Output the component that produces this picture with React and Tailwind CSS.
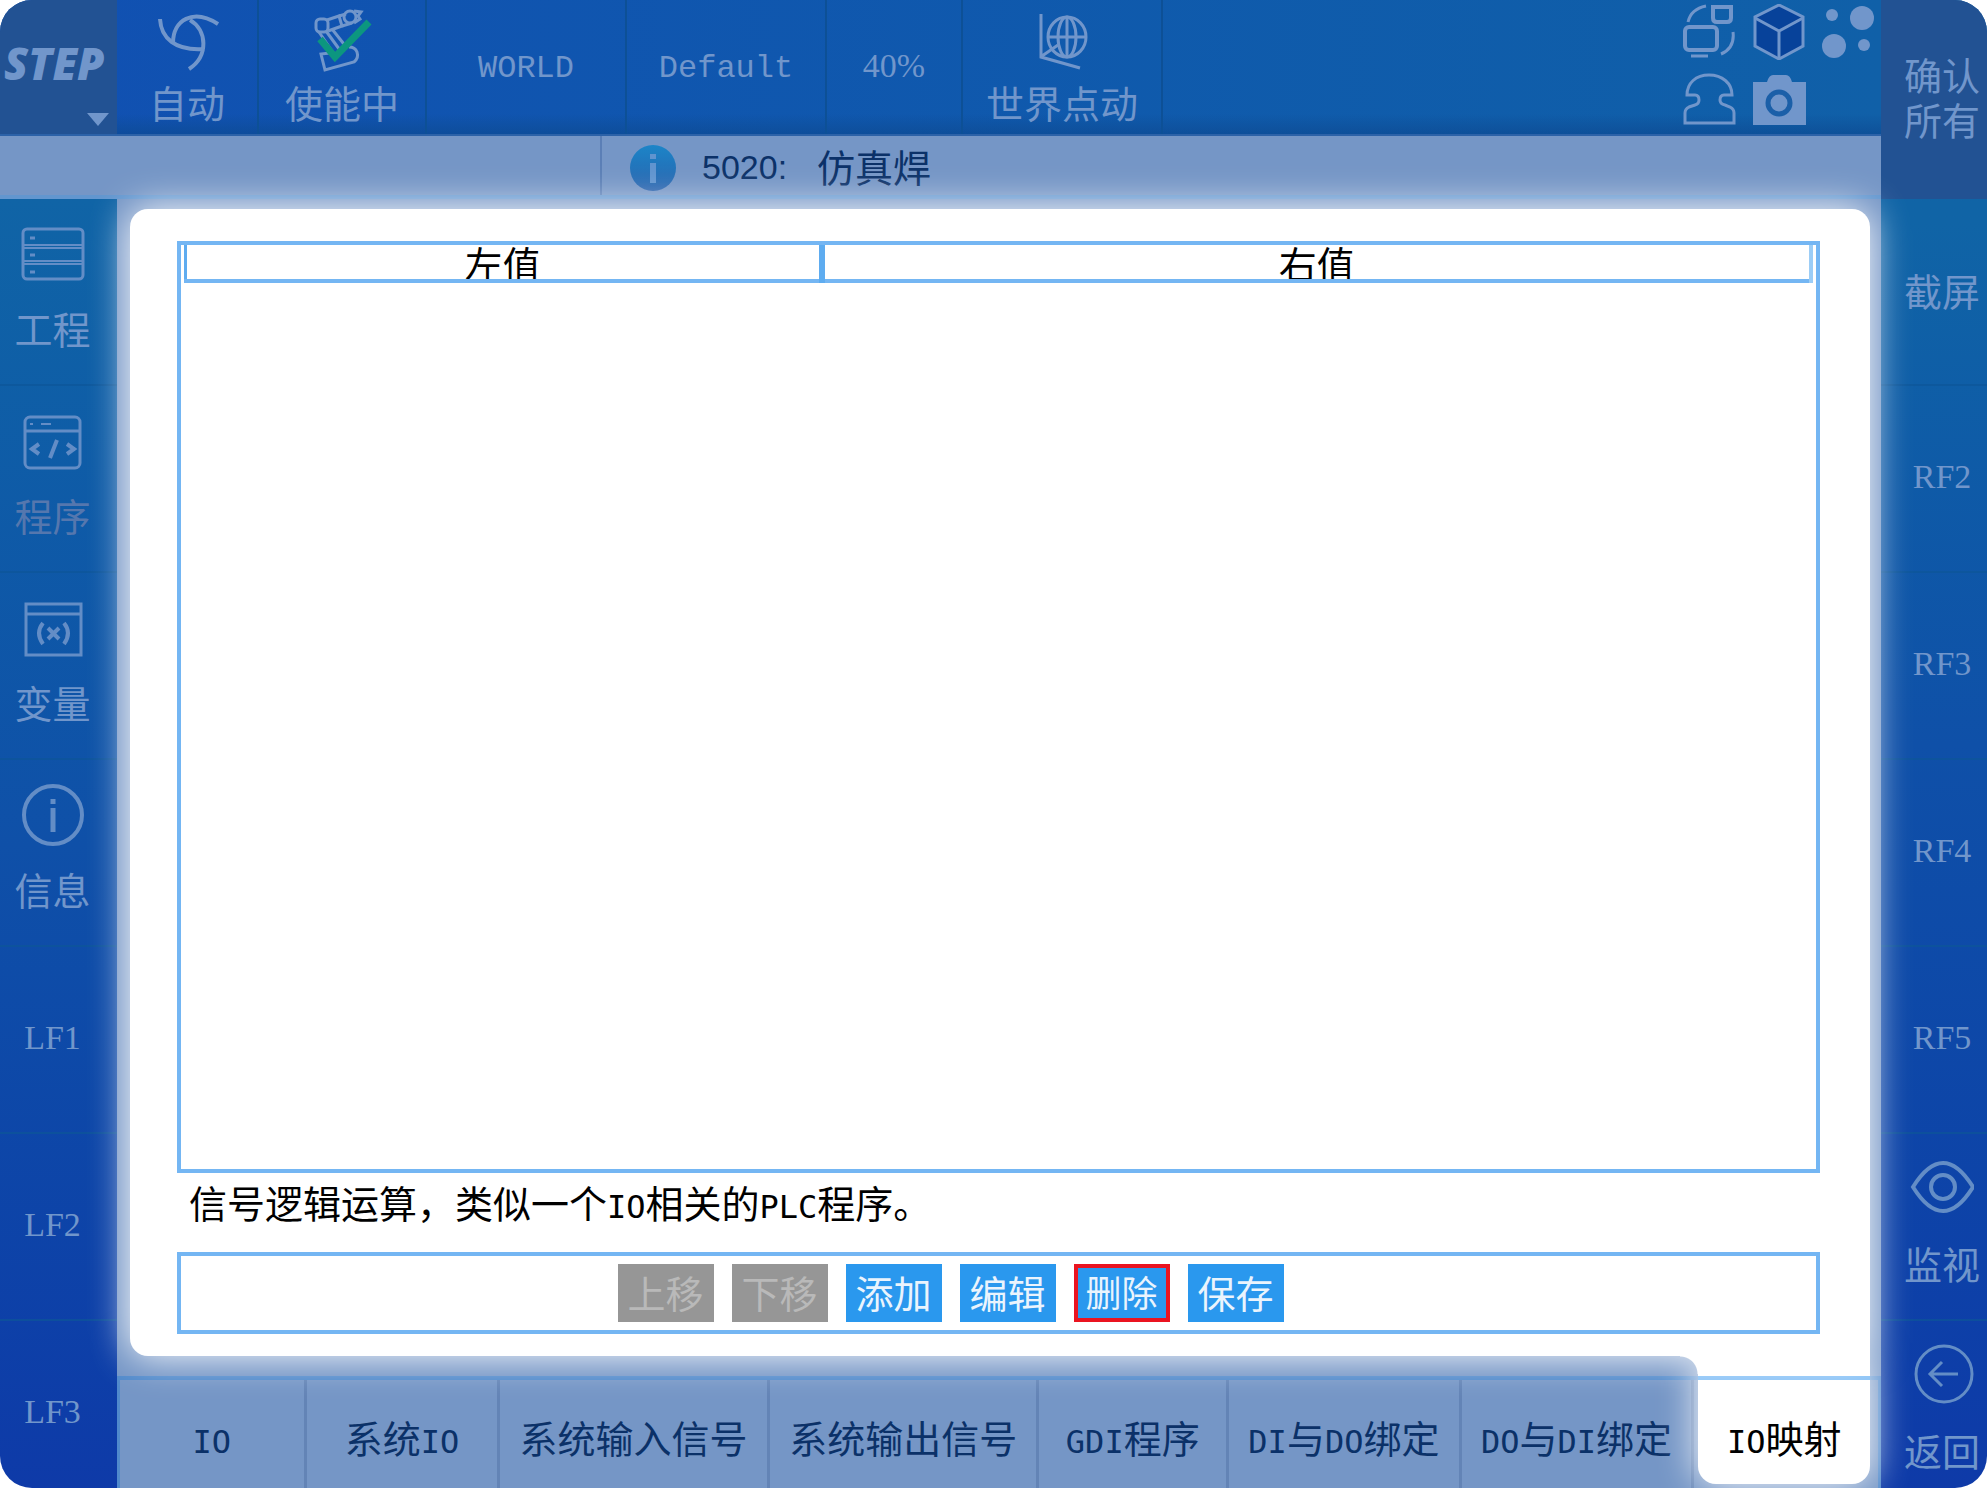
import { useState } from "react";

const leftItems = [
  { label: "工程", icon: "project" },
  { label: "程序", icon: "code", dim: true },
  { label: "变量", icon: "variable" },
  { label: "信息", icon: "info" },
  { label: "LF1" },
  { label: "LF2" },
  { label: "LF3" },
];

const rightItems = [
  { label: "截屏" },
  { label: "RF2" },
  { label: "RF3" },
  { label: "RF4" },
  { label: "RF5" },
  { label: "监视", icon: "eye" },
  { label: "返回", icon: "back" },
];

const tabs = [
  "IO",
  "系统IO",
  "系统输入信号",
  "系统输出信号",
  "GDI程序",
  "DI与DO绑定",
  "DO与DI绑定",
  "IO映射",
];

const actions = [
  { label: "上移", disabled: true },
  { label: "下移", disabled: true },
  { label: "添加" },
  { label: "编辑" },
  { label: "删除", danger: true },
  { label: "保存" },
];

const stroke = { fill: "none", stroke: "currentColor", strokeWidth: 3 };

const icons = {
  project: (
    <g {...stroke}>
      <rect x="2" y="7" width="60" height="50" rx="4" />
      <path d="M2 23h60M2 26h60M2 39h60M2 42h60" strokeWidth="2" />
      <path d="M9 16h5M9 33h5M9 50h5" />
    </g>
  ),
  code: (
    <g {...stroke}>
      <rect x="4" y="8" width="55" height="51" rx="5" />
      <path d="M4 22h55" />
      <path d="M9 15h3M20 15h10" strokeWidth="2" />
      <path d="M18 35l-7 5 7 5M46 35l7 5-7 5M36 31l-7 18" strokeWidth="4" />
    </g>
  ),
  variable: (
    <g {...stroke}>
      <rect x="5" y="8" width="55" height="51" />
      <path d="M5 18h55" />
      <path d="M22 27q-8 10 0 21M43 27q8 10 0 21M27 32l11 11M38 32l-11 11" strokeWidth="4" />
    </g>
  ),
  info: (
    <g {...stroke}>
      <circle cx="32" cy="32" r="29" strokeWidth="4" />
      <path d="M32 16v5M32 25v24" strokeWidth="5" />
    </g>
  ),
  eye: (
    <g {...stroke} strokeWidth="4">
      <path d="M3 30Q18 6 33 6T63 30Q48 54 33 54T3 30z" />
      <circle cx="33" cy="30" r="12" />
    </g>
  ),
  back: (
    <g {...stroke}>
      <circle cx="34" cy="30" r="28" />
      <path d="M48 30H21M32 18L20 30l12 12" />
    </g>
  ),
};

function Icon({ name }) {
  return (
    <svg viewBox="0 0 64 64" className="h-16 w-16">
      {icons[name]}
    </svg>
  );
}

// Latin runs are half the width of a Chinese character
function Label({ text }) {
  return text.split(/([A-Za-z]+)/).map((part, i) =>
    /^[A-Za-z]+$/.test(part) ? (
      <span key={i} className="font-['DejaVu_Sans_Mono',monospace] text-[32px] leading-none">
        {part}
      </span>
    ) : (
      part
    ),
  );
}

function SideButton({ item, className }) {
  return (
    <button
      type="button"
      className={`flex h-[187px] w-full shrink-0 flex-col items-center border-b-2 border-[#0d5598]/70 leading-[44px] ${
        item.icon ? "pt-[23px]" : "justify-center pb-1"
      } ${item.dim ? "text-[#5577ae]" : "text-[#7196cb]"} ${className}`}
    >
      {item.icon && (
        <span className="mb-5 text-[#638dc6]">
          <Icon name={item.icon} />
        </span>
      )}
      <span
        className={
          item.label.length === 3 ? "font-['Liberation_Serif',serif] text-[34px]" : "text-[38px]"
        }
      >
        {item.label}
      </span>
    </button>
  );
}

function StatusCell({ label, children, className }) {
  return (
    <button
      type="button"
      className={`flex h-full shrink-0 flex-col items-center border-r-2 border-[#0d5096] ${
        children ? "pt-2" : "justify-center"
      } ${className}`}
    >
      {children}
      <span className={children ? "mt-1 leading-[44px]" : ""}>{label}</span>
    </button>
  );
}

function Header() {
  return (
    <header className="flex h-[136px] shrink-0 border-b-2 border-[#2c62a8] bg-linear-to-r from-[#1150b2] to-[#1060a8] text-[38px] text-[#7196cb]">
      <button
        type="button"
        className="flex w-[117px] shrink-0 flex-col items-start bg-[#225293] pt-9 pl-1 font-['Open_Sans',sans-serif] text-[44px] leading-[54px] font-extrabold italic"
      >
        STEP
        <svg viewBox="0 0 22 13" className="mt-[23px] mr-2 h-[13px] w-[22px] self-end">
          <path d="M0 0h22L11 13z" fill="currentColor" />
        </svg>
      </button>
      <div className="flex min-w-0 flex-1 bg-linear-to-t from-[#0d4a92]/70 to-transparent to-15%">
        <StatusCell label="自动" className="w-[142px]">
          <svg viewBox="0 0 64 68" className="h-17 w-16" {...stroke} strokeWidth="4">
            <path d="M5 11C6 30 20 43 49 41" />
            <path d="M18 35C18 12 38 0 63 16" />
            <path d="M35 12C52 22 54 48 34 61" />
          </svg>
        </StatusCell>
        <StatusCell label="使能中" className="w-[168px]">
          <svg viewBox="0 0 64 68" className="h-17 w-16" {...stroke}>
            <rect x="6" y="11" width="12" height="13" rx="4" />
            <path d="M17 12l12-4 3 10-14 5" />
            <path d="M29 8l7-2M32 18l10-3M44 3l7 1-3 4 2 3-6 4" />
            <circle cx="40" cy="9" r="6" />
            <path d="M9 24l15 22M16 23l16 22M22 21l15 19" />
            <path d="M20 45l-9 1 4 16 29-8q5-4 3-10-2-5-8-5" />
            <path d="M10 31l15 18 34-35" stroke="#0c967f" strokeWidth="7" />
          </svg>
        </StatusCell>
        <StatusCell
          label="WORLD"
          className="w-[200px] pt-1 font-['Liberation_Mono',monospace] text-[32px]"
        />
        <StatusCell
          label="Default"
          className="w-[200px] pt-1 font-['Liberation_Mono',monospace] text-[32px]"
        />
        <StatusCell
          label="40%"
          className="w-[136px] pb-1 font-['Liberation_Serif',serif] text-[34px]"
        />
        <StatusCell label="世界点动" className="w-[200px]">
          <svg viewBox="0 0 64 68" className="h-17 w-16" {...stroke}>
            <path d="M11 6v43l39 11M12 48l16-11" />
            <ellipse cx="37" cy="29" rx="19" ry="20" />
            <ellipse cx="37" cy="29" rx="9" ry="20" />
            <path d="M37 9v40M18 29h38" />
          </svg>
        </StatusCell>
        <div className="ml-auto grid grid-cols-3 content-start gap-x-4 gap-y-3 pt-1 pr-[5px]">
          <button type="button" aria-label="切换">
            <svg viewBox="0 0 54 56" className="h-14 w-[54px]" {...stroke}>
              <rect x="3" y="23" width="32" height="23" rx="4" strokeWidth="4" />
              <path d="M9 52h17M6 18Q9 5 24 2" />
              <path d="M31 3h18v11q0 4-4 4H35q-4 0-4-4z" strokeWidth="4" />
              <path d="M51 28q2 16-12 22" />
            </svg>
          </button>
          <button type="button" aria-label="模型">
            <svg viewBox="0 0 54 56" className="h-14 w-[54px]" {...stroke} fill="#07429a">
              <path d="M27 1l24 12v29L27 55 3 42V13z" />
              <path d="M3 14l24 13 24-13M27 27v28" fill="none" />
            </svg>
          </button>
          <button type="button" aria-label="状态">
            <svg viewBox="0 0 54 56" className="h-14 w-[54px]" fill="currentColor">
              <circle cx="10" cy="11" r="6" />
              <circle cx="40" cy="14" r="12" />
              <circle cx="12" cy="42" r="12" />
              <circle cx="42" cy="41" r="6" />
            </svg>
          </button>
          <button type="button" aria-label="用户">
            <svg viewBox="0 0 54 56" className="h-14 w-[54px]" {...stroke}>
              <path d="M5 23C5 11 14 3 27 3s23 8 23 20h-8q-4 0-4 5 0 4 5 5l5 2q4 2 4 6v10H3V41q0-4 4-6l6-2q4-1 4-5 0-5-4-5z" />
            </svg>
          </button>
          <button type="button" aria-label="相机">
            <svg viewBox="0 0 54 56" className="h-14 w-[54px]">
              <path d="M1 10h14q2-7 6-7h13q4 0 6 7h14v43H1z" fill="currentColor" />
              <circle cx="27" cy="31" r="11" fill="none" stroke="#1b5fa8" strokeWidth="5" />
            </svg>
          </button>
        </div>
      </div>
    </header>
  );
}

function MessageBar() {
  return (
    <div className="flex h-[63px] shrink-0 border-b-4 border-[#6296cf] bg-[#7596c6] text-[38px] leading-[59px] text-[#0b3168]">
      <div className="w-[602px] shrink-0 border-r-2 border-[#5b7fb6]" />
      <div className="flex items-center pt-1 pl-[27px]">
        <svg viewBox="0 0 48 48" className="mr-[25px] h-12 w-12">
          <defs>
            <linearGradient id="badge" x1="0" y1="0" x2="0" y2="1">
              <stop offset="0" stopColor="#1c85c8" />
              <stop offset="1" stopColor="#2862ad" />
            </linearGradient>
          </defs>
          <circle cx="24" cy="24" r="23" fill="url(#badge)" />
          <path d="M24 10v5M24 19v20" stroke="#6094cf" strokeWidth="6" />
        </svg>
        <span className="font-['Liberation_Sans',sans-serif] text-[34px]">5020:</span>
        <span className="ml-[30px] pb-1">仿真焊</span>
      </div>
    </div>
  );
}

function MappingTable() {
  return (
    <div className="min-h-0 flex-1 border-4 border-[#74b6f3] px-[3px]">
      <table className="w-full table-fixed border-collapse">
        <thead>
          <tr className="border-b-4 border-[#74b6f3] text-[38px]">
            <th className="w-[636px] border-r-6 border-l-3 border-[#5eacf0] p-0 font-normal">
              <div className="h-[34px] overflow-hidden leading-[36px]">左值</div>
            </th>
            <th className="border-r-4 border-r-[#9ccdf6] p-0 font-normal">
              <div className="h-[34px] overflow-hidden leading-[36px]">右值</div>
            </th>
          </tr>
        </thead>
        <tbody />
      </table>
    </div>
  );
}

function Panel() {
  return (
    <section className="relative z-20 mt-[10px] mr-[11px] mb-5 ml-[13px] flex min-h-0 flex-1 flex-col rounded-[18px] rounded-br-none bg-white pt-8 pr-[50px] pb-[22px] pl-[47px] text-black shadow-[0_0_38px_#fff]">
      <MappingTable />
      <p className="h-[79px] pl-3 text-[38px] leading-[58px]">
        <Label text="信号逻辑运算，类似一个IO相关的PLC程序。" />
      </p>
      <div className="flex items-center justify-center gap-[18px] border-4 border-[#74b6f3] py-2 pr-24">
        {actions.map(({ label, disabled, danger }) => (
          <button
            key={label}
            type="button"
            disabled={disabled}
            className={`flex h-[58px] w-24 items-center justify-center pb-1 ${
              disabled ? "bg-[#969696] text-[#b9b9b9]" : "bg-[#2a98ee] text-[#eaf4fd]"
            } ${danger ? "border-4 border-[#ea1420] text-[36px]" : "text-[38px]"}`}
          >
            {label}
          </button>
        ))}
      </div>
    </section>
  );
}

function TabBar() {
  const [active, setActive] = useState("IO映射");

  return (
    <nav className="grid h-[112px] shrink-0 grid-cols-[187fr_194fr_270fr_270fr_190fr_233fr_233fr_184fr] border-t-4 border-r-3 border-l-3 border-[#5089cb] text-[38px] text-[#0b3168]">
      {tabs.map((tab) =>
        tab === active ? (
          <button
            key={tab}
            type="button"
            className="relative z-10 -mt-6 mr-2 mb-1 ml-1 rounded-b-[18px] bg-white pt-8 text-black shadow-[0_0_38px_#fff]"
          >
            <span className="absolute top-5 left-0 h-1 w-full bg-[#8cc4f7]" />
            <span className="absolute top-0 right-full h-[18px] w-[18px] bg-[radial-gradient(circle_at_0_100%,transparent_17px,#fff_18px)]" />
            <Label text={tab} />
          </button>
        ) : (
          <button
            key={tab}
            type="button"
            onClick={() => setActive(tab)}
            className="border-r-3 border-[#6384b6] pt-1 whitespace-nowrap"
          >
            <Label text={tab} />
          </button>
        ),
      )}
    </nav>
  );
}

export default function App() {
  return (
    <div className="h-screen bg-white font-['Noto_Sans_CJK_SC',sans-serif]">
      <div className="flex h-full overflow-hidden rounded-[32px]">
        <div className="flex min-w-0 flex-1 flex-col">
          <Header />
          <MessageBar />
          <div className="flex min-h-0 flex-1">
            <aside className="flex w-[117px] shrink-0 flex-col overflow-hidden bg-linear-to-b from-[#1064a6] via-[#0f50a8] to-[#0e3aa8]">
              {leftItems.map((item) => (
                <SideButton key={item.label} item={item} className="pr-3" />
              ))}
            </aside>
            <main className="flex min-w-0 flex-1 flex-col bg-[#7596c6]">
              <Panel />
              <TabBar />
            </main>
          </div>
        </div>
        <aside className="flex w-[106px] shrink-0 flex-col overflow-hidden bg-linear-to-b from-[#1064a6] from-15% via-[#0f50a8] to-[#0e3aa8]">
          <button
            type="button"
            className="h-[199px] shrink-0 bg-[#225293] pb-2 pl-4 text-[38px] leading-[45px] text-[#7196cb]"
          >
            确认
            <br />
            所有
          </button>
          {rightItems.map((item) => (
            <SideButton key={item.label} item={item} className="pl-4" />
          ))}
        </aside>
      </div>
    </div>
  );
}
